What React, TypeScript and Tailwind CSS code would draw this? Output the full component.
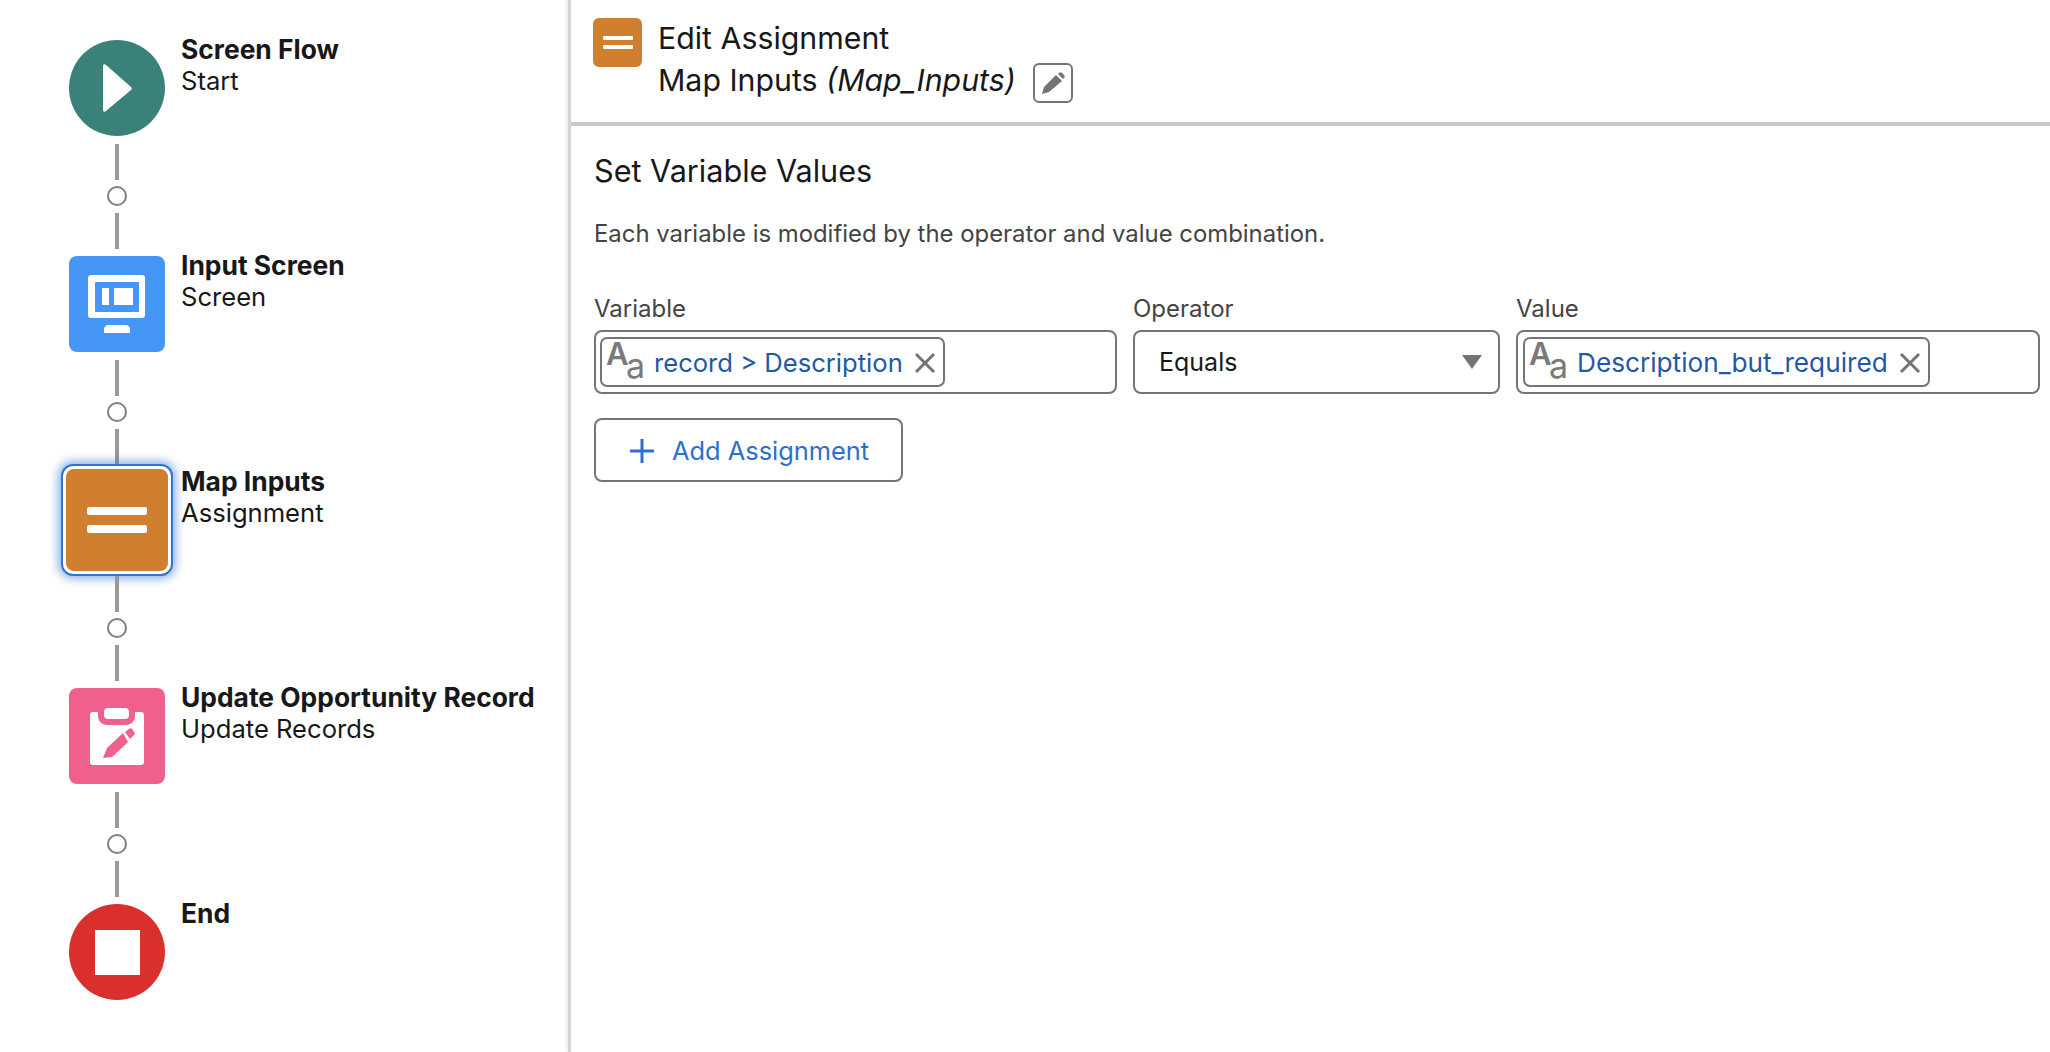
const font = { fontFamily: "Inter, 'Liberation Sans', sans-serif" };

const Connector = () => (
  <div className="h-[120px] w-[96px] flex flex-col items-center pt-[8px]">
    <div className="w-[4px] h-[36px] bg-[#999999]" />
    <div className="mt-[6px] w-[20px] h-[20px] rounded-full border-2 border-[#808080] bg-white" />
    <div className="mt-[7px] w-[4px] h-[36px] bg-[#999999]" />
  </div>
);

const Lines = ({ large }: { large?: boolean }) => (
  <div className={large ? "flex flex-col gap-[10px]" : "flex flex-col gap-[5px]"}>
    <div className={large ? "w-[60px] h-[8px] rounded-[2px] bg-white" : "w-[30px] h-[4px] rounded-[1px] bg-white"} />
    <div className={large ? "w-[60px] h-[8px] rounded-[2px] bg-white" : "w-[30px] h-[4px] rounded-[1px] bg-white"} />
  </div>
);

const ScreenIcon = () => (
  <svg width="58" height="58" viewBox="0 0 58 58">
    <rect x="0" y="0" width="57" height="43" rx="3" fill="#fff" />
    <rect x="7" y="7" width="44" height="30" rx="1" fill="#4696f7" />
    <rect x="14" y="13" width="7" height="17" fill="#fff" />
    <rect x="26" y="13" width="19" height="17" fill="#fff" />
    <path d="M16 58v-4c0-2 2-4 4-4h18c2 0 4 2 4 4v4z" fill="#fff" />
  </svg>
);

const ClipboardIcon = () => (
  <svg width="54" height="58" viewBox="0 0 54 58">
    <path d="M3 5h5v4c0 5 4 9 9 9h19c5 0 9-4 9-9V5h6c2 0 3 1 3 3v47c0 2-1 3-3 3H3c-2 0-3-1-3-3V8c0-2 1-3 3-3z" fill="#fff" />
    <rect x="14" y="1" width="25" height="11" rx="4" fill="#fff" />
    <path d="M13 51l4-10 16-15 5 9-16 15z" fill="#f0608c" />
    <path d="M35 25l4-3c1-1 2-1 3 0l2 3c1 1 1 2 0 3l-4 4z" fill="#f0608c" />
  </svg>
);

const steps = [
  { title: "Screen Flow", sub: "Start" },
  { title: "Input Screen", sub: "Screen" },
  { title: "Map Inputs", sub: "Assignment" },
  { title: "Update Opportunity Record", sub: "Update Records" },
  { title: "End", sub: "" },
];

const nodeIcons = [
  <div className="w-[96px] h-[96px] rounded-full bg-[#3a8279] flex items-center justify-center">
    <svg width="30" height="48" viewBox="0 0 30 48">
      <path d="M1 2c0-2 2-2 3-1l25 22c1 1 1 2 0 3L4 47c-1 1-3 1-3-1z" fill="#fff" />
    </svg>
  </div>,
  <div className="w-[96px] h-[96px] rounded-[8px] bg-[#4696f7] flex items-center justify-center">
    <ScreenIcon />
  </div>,
  <div className="shrink-0 w-[112px] h-[112px] rounded-[12px] border-2 border-[#2f74d0] bg-white p-[3px] shadow-[0_0_10px_3px_rgba(47,116,208,0.55)]">
    <div className="w-full h-full rounded-[8px] bg-[#cf7f2d] flex items-center justify-center">
      <Lines large />
    </div>
  </div>,
  <div className="w-[96px] h-[96px] rounded-[8px] bg-[#f0608c] flex items-center justify-center">
    <ClipboardIcon />
  </div>,
  <div className="w-[96px] h-[96px] rounded-full bg-[#d92f2d] flex items-center justify-center">
    <div className="w-[45px] h-[45px] bg-white" />
  </div>,
];

const AaIcon = () => (
  <span className="relative w-[46px] h-[46px] shrink-0 text-[#7a7a7a]">
    <span className="absolute left-[3px] -top-[4px] text-[31px] leading-[38px] font-semibold">A</span>
    <span className="absolute left-[23px] top-[8px] text-[34px] leading-[38px]">a</span>
  </span>
);

const Pill = ({ label, size }: { label: string; size: string }) => (
  <div className="h-[50px] rounded-[7px] border-2 border-[#757575] flex items-center pl-[1px] pr-[7px]">
    <AaIcon />
    <span className={`ml-[5px] mt-[2px] text-[#1f58a8] whitespace-nowrap ${size}`}>{label}</span>
    <svg width="22" height="22" viewBox="0 0 22 22" className="ml-[11px] mt-[1px]">
      <path d="M2 2l18 18M20 2L2 20" stroke="#747474" strokeWidth="3" fill="none" />
    </svg>
  </div>
);

export default function App() {
  return (
    <div style={font} className="w-[2050px] h-[1052px] bg-white flex overflow-hidden text-[#181818]">
      <div className="w-[568px] shrink-0 pt-[40px] pl-[69px]">
        {steps.map((step, i) => (
          <div key={step.title}>
            <div className="flex h-[96px]">
              <div className="w-[96px] h-[96px] shrink-0 flex items-center justify-center">{nodeIcons[i]}</div>
              <div className="ml-[16px] -mt-[7px] leading-[32px] whitespace-nowrap">
                <div className="font-bold text-[26.4px]">{step.title}</div>
                <div className="text-[25.6px]">{step.sub}</div>
              </div>
            </div>
            {i < steps.length - 1 && <Connector />}
          </div>
        ))}
      </div>

      <div className="flex-1 border-l-[3px] border-[#d4d4d4] shadow-[-2px_0_3px_rgba(0,0,0,0.08)]">
        <div className="h-[126px] border-b-[4px] border-[#c9c9c9] flex pl-[22px] pt-[18px]">
          <div className="w-[49px] h-[49px] rounded-[6px] bg-[#cf7f2d] flex items-center justify-center">
            <Lines />
          </div>
          <div className="ml-[16px] mt-[1px] text-[30.3px] leading-[38px]">
            <div>Edit Assignment</div>
            <div className="flex items-center">
              Map Inputs&nbsp;<i>(Map_Inputs)</i>
              <span className="ml-[17px] mt-[6px] w-[40px] h-[40px] rounded-[6px] border-2 border-[#757575] flex items-center justify-center">
                <svg width="24" height="24" viewBox="0 0 24 24">
                  <path d="M1 23l2-7L15 4l6 6L8 21z" fill="#747474" />
                  <path d="M17 3l1-1c1-1 2-1 3 0l2 2c1 1 1 2 0 3l-1 1z" fill="#747474" />
                </svg>
              </span>
            </div>
          </div>
        </div>

        <div className="pl-[23px] pr-[11px]">
          <h2 className="mt-[25px] text-[30.6px] leading-[40px]">Set Variable Values</h2>
          <p className="mt-[27px] text-[23.9px] leading-[32px] text-[#444444]">
            Each variable is modified by the operator and value combination.
          </p>
          <div className="mt-[43px] grid grid-cols-[523px_367px_524px] gap-x-[16px]">
            <div>
              <div className="text-[24px] leading-[32px] text-[#444444] mb-[5px]">Variable</div>
              <div className="h-[64px] rounded-[8px] border-2 border-[#757575] flex items-center px-[4px]">
                <Pill label="record > Description" size="text-[25.6px]" />
              </div>
            </div>
            <div>
              <div className="text-[24px] leading-[32px] text-[#444444] mb-[5px]">Operator</div>
              <div className="h-[64px] rounded-[8px] border-2 border-[#757575] flex items-center justify-between pl-[24px] pr-[16px] text-[25px]">
                <span className="mt-[2px]">Equals</span>
                <svg width="20" height="14" viewBox="0 0 20 14">
                  <path d="M0 0h20L10 14z" fill="#747474" />
                </svg>
              </div>
            </div>
            <div>
              <div className="text-[24px] leading-[32px] text-[#444444] mb-[5px]">Value</div>
              <div className="h-[64px] rounded-[8px] border-2 border-[#757575] flex items-center px-[5px]">
                <Pill label="Description_but_required" size="text-[26.2px]" />
              </div>
            </div>
          </div>
          <button className="mt-[24px] w-[309px] h-[64px] rounded-[8px] border-2 border-[#757575] flex items-center pl-[34px] text-[25.4px] text-[#2c6fd0]">
            <svg width="24" height="24" viewBox="0 0 24 24" className="mt-[2px]">
              <path d="M12 0v24M0 12h24" stroke="#2c6fd0" strokeWidth="3" fill="none" />
            </svg>
            <span className="ml-[18px] mt-[2px]">Add Assignment</span>
          </button>
        </div>
      </div>
    </div>
  );
}
